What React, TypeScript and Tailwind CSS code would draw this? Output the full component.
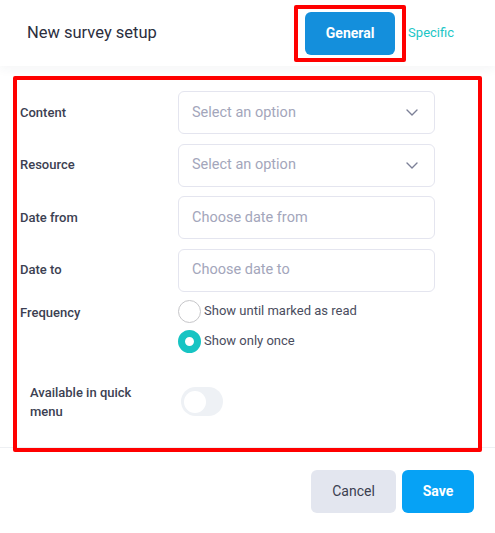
import React from "react"

// Survey setup modal — general tab

function Chevron() {
  return (
    <svg width="12" height="7" viewBox="0 0 12 7" fill="none">
      <path d="M1 1l5 5 5-5" stroke="#7c8097" strokeWidth="1.4" strokeLinecap="round" strokeLinejoin="round" />
    </svg>
  )
}

function Field({ label, placeholder, select }: { label: string; placeholder: string; select?: boolean }) {
  return (
    <div className="flex items-center">
      <div className="w-[158px] text-[13px] font-medium text-[#3c3f52]">{label}</div>
      <div className="flex h-[43px] w-[257px] items-center justify-between rounded-[6px] border border-[#e4e5ef] pl-[13px] pr-[16px]">
        <span className="text-[14.5px] text-[#a3a6bb]">{placeholder}</span>
        {select && <Chevron />}
      </div>
    </div>
  )
}

function Radio({ checked, label }: { checked?: boolean; label: string }) {
  return (
    <div className="flex items-center">
      {checked ? (
        <span className="box-border h-[23px] w-[23px] rounded-full border-[7px] border-[#17c4c3] bg-white" />
      ) : (
        <span className="box-border h-[23px] w-[23px] rounded-full border border-[#c6c6c9] bg-white" />
      )}
      <span className="ml-[3px] text-[13px] text-[#4a4d5e]">{label}</span>
    </div>
  )
}

export default function App() {
  return (
    <div className="h-[533px] w-[495px] bg-white font-['Roboto',sans-serif]">
      <header className="relative z-10 flex h-[66px] items-center bg-white pl-[27px] shadow-[0_3px_10px_rgba(40,50,80,0.05)]">
        <h1 className="text-[16.5px] text-[#2b2e3d]">New survey setup</h1>
        <div className="ml-auto mr-[41px] flex items-center">
          <div className="rounded-[2px] border-4 border-[#ff0000] px-[7px] py-[3px]">
            <button className="h-[43px] w-[90px] rounded-[6px] bg-[#148fdc] text-[14px] font-bold text-white">General</button>
          </div>
          <span className="ml-[2px] text-[13px] text-[#1cc6c6]">Specific</span>
        </div>
      </header>

      <section className="border-b border-[#eef0f3] px-[13px] pt-[10px]">
        <div className="relative z-10 -mb-[5px] box-border h-[376px] rounded-[2px] border-4 border-[#ff0000] pl-[3px] pt-[11px]">
          <div className="flex flex-col gap-[9.5px]">
            <Field label="Content" placeholder="Select an option" select />
            <Field label="Resource" placeholder="Select an option" select />
            <Field label="Date from" placeholder="Choose date from" />
            <Field label="Date to" placeholder="Choose date to" />
          </div>

          <div className="mt-[8px] flex">
            <div className="w-[158px] pt-[3px] text-[13px] font-medium text-[#3c3f52]">Frequency</div>
            <div className="flex flex-col gap-[7px]">
              <Radio label="Show until marked as read" />
              <Radio checked label="Show only once" />
            </div>
          </div>

          <div className="mt-[30px] flex items-center">
            <div className="w-[161px] pl-[10px] pr-[40px] text-[13px] font-medium leading-[19px] text-[#3c3f52]">Available in quick menu</div>
            <div className="flex h-[29px] w-[42px] items-center rounded-full bg-[#eef1f5] pl-[3px]">
              <span className="h-[22px] w-[22px] rounded-full bg-white" />
            </div>
          </div>
        </div>
      </section>

      <footer className="flex justify-end gap-[6px] pr-[21px] pt-[22px]">
        <button className="h-[43px] w-[85px] rounded-[6px] bg-[#e3e6ef] text-[14px] text-[#3b3e4f]">Cancel</button>
        <button className="h-[43px] w-[72px] rounded-[6px] bg-[#06a2f5] text-[14px] font-bold text-white">Save</button>
      </footer>
    </div>
  )
}
